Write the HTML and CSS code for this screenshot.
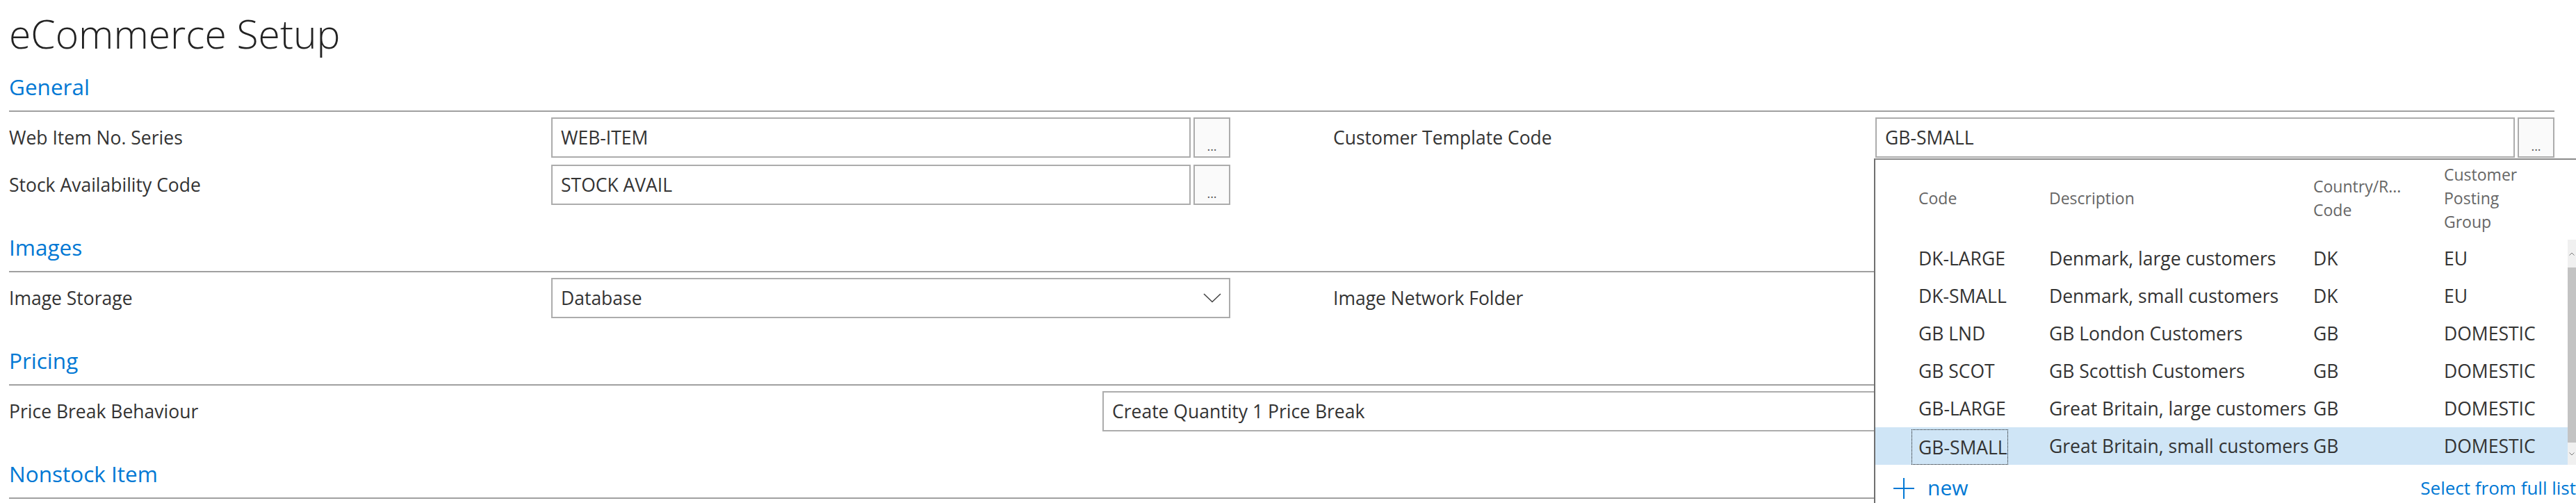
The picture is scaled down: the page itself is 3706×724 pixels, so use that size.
FILE: index.html
```html
<!DOCTYPE html>
<html lang="en">
<head>
<meta charset="utf-8">
<title>eCommerce Setup</title>
<link rel="stylesheet" href="styles.css">
</head>
<body>
<div class="page">
  <h1 class="title">eCommerce Setup</h1>

  <section class="section">
    <h2 class="section-head">General</h2>
    <div class="fields">
      <div class="field">
        <span class="label">Web Item No. Series</span>
        <div class="control"><div class="input">WEB-ITEM</div><div class="assist">...</div></div>
      </div>
      <div class="field">
        <span class="label">Customer Template Code</span>
        <div class="control"><div class="input">GB-SMALL</div><div class="assist">...</div></div>
      </div>
      <div class="field">
        <span class="label">Stock Availability Code</span>
        <div class="control"><div class="input">STOCK AVAIL</div><div class="assist">...</div></div>
      </div>
    </div>
  </section>

  <section class="section">
    <h2 class="section-head">Images</h2>
    <div class="fields">
      <div class="field">
        <span class="label">Image Storage</span>
        <div class="control"><div class="input select"><span>Database</span>
          <svg class="chev" width="26" height="14" viewBox="0 0 26 14"><polyline points="1,1 13,12.5 25,1" fill="none" stroke="#444" stroke-width="1.6"/></svg></div></div>
      </div>
      <div class="field">
        <span class="label">Image Network Folder</span>
        <div class="control"><div class="input"></div></div>
      </div>
    </div>
  </section>

  <section class="section">
    <h2 class="section-head">Pricing</h2>
    <div class="fields">
      <div class="field wide">
        <span class="label">Price Break Behaviour</span>
        <div class="control"><div class="input select"><span>Create Quantity 1 Price Break</span></div></div>
      </div>
    </div>
  </section>

  <section class="section">
    <h2 class="section-head">Nonstock Item</h2>
  </section>
</div>

<div class="lookup">
  <div class="lk-head">
    <div class="lk-cell"></div>
    <div class="lk-cell code">Code</div>
    <div class="lk-cell">Description</div>
    <div class="lk-cell">Country/R...<br>Code</div>
    <div class="lk-cell">Customer<br>Posting<br>Group</div>
  </div>
  <div class="lk-body">
    <div class="lk-rows">
      <div class="lk-row"><div class="lk-cell"></div><div class="lk-cell code">DK-LARGE</div><div class="lk-cell">Denmark, large customers</div><div class="lk-cell">DK</div><div class="lk-cell">EU</div></div>
      <div class="lk-row"><div class="lk-cell"></div><div class="lk-cell code">DK-SMALL</div><div class="lk-cell">Denmark, small customers</div><div class="lk-cell">DK</div><div class="lk-cell">EU</div></div>
      <div class="lk-row"><div class="lk-cell"></div><div class="lk-cell code">GB LND</div><div class="lk-cell">GB London Customers</div><div class="lk-cell">GB</div><div class="lk-cell">DOMESTIC</div></div>
      <div class="lk-row"><div class="lk-cell"></div><div class="lk-cell code">GB SCOT</div><div class="lk-cell">GB Scottish Customers</div><div class="lk-cell">GB</div><div class="lk-cell">DOMESTIC</div></div>
      <div class="lk-row"><div class="lk-cell"></div><div class="lk-cell code">GB-LARGE</div><div class="lk-cell">Great Britain, large customers</div><div class="lk-cell">GB</div><div class="lk-cell">DOMESTIC</div></div>
      <div class="lk-row selected"><div class="lk-cell"></div><div class="lk-cell code"><span class="focus">GB-SMALL</span></div><div class="lk-cell">Great Britain, small customers</div><div class="lk-cell">GB</div><div class="lk-cell">DOMESTIC</div></div>
    </div>
    <div class="scrollbar">
      <div class="sb-arrow up"><svg width="8" height="5" viewBox="0 0 8 5"><polyline points="0.5,4.5 4,1 7.5,4.5" fill="none" stroke="#777" stroke-width="1"/></svg></div>
      <div class="sb-thumb"></div>
      <div class="sb-arrow down"><svg width="8" height="5" viewBox="0 0 8 5"><polyline points="0.5,0.5 4,4 7.5,0.5" fill="none" stroke="#777" stroke-width="1"/></svg></div>
    </div>
  </div>
  <div class="lk-foot">
    <svg class="plus" width="30" height="30" viewBox="0 0 30 30"><line x1="15" y1="0" x2="15" y2="30" stroke="#0078d4" stroke-width="2"/><line x1="0" y1="15" x2="30" y2="15" stroke="#0078d4" stroke-width="2"/></svg>
    <span class="new">new</span>
    <span class="full">Select from full list</span>
  </div>
</div>
</body>
</html>
```

FILE: styles.css
```css
* { box-sizing: border-box; }

html, body {
  margin: 0;
  padding: 0;
  background: #fff;
}

body {
  font-family: "Open Sans", "Noto Sans", sans-serif;
  color: #333;
  width: 3706px;
  height: 724px;
  overflow: hidden;
  position: relative;
}

.page {
  padding: 0 31px 0 13px;
  height: 724px;
  overflow: hidden;
}

.title {
  margin: 0;
  padding-top: 8px;
  font-size: 57px;
  line-height: 80px;
  font-weight: 300;
  color: #222;
}

.section-head {
  margin: 41px 0 0;
  padding-bottom: 14px;
  font-size: 31.5px;
  line-height: 40px;
  font-weight: 400;
  color: #0078d4;
  border-bottom: 2px solid #a0a0a0;
}

.section:first-of-type .section-head {
  margin-top: 17px;
}

.fields {
  display: grid;
  grid-template-columns: 1757px 1757px;
  column-gap: 148px;
  row-gap: 10px;
  padding-top: 8px;
}

.field {
  display: grid;
  grid-template-columns: 780px 1fr;
  align-items: center;
  height: 58px;
}

.field.wide {
  grid-column: 1 / -1;
  grid-template-columns: 1573px 1fr;
}

.label {
  font-size: 26.5px;
  color: #333;
  white-space: nowrap;
}

.control {
  display: flex;
  gap: 4px;
  height: 58px;
}

.input {
  flex: 1;
  display: flex;
  align-items: center;
  padding: 0 12px;
  border: 2px solid #acacac;
  font-size: 26.5px;
  color: #333;
  white-space: nowrap;
}

.input.select {
  justify-content: space-between;
  padding-right: 11px;
}

.chev { display: block; }

.assist {
  width: 53px;
  display: flex;
  justify-content: center;
  align-items: flex-end;
  padding-bottom: 6px;
  border: 2px solid #acacac;
  background: #fafafa;
  font-size: 18px;
  line-height: 1;
  color: #555;
}

/* lookup dropdown */
.lookup {
  position: absolute;
  left: 2696px;
  top: 228px;
  width: 1010px;
  height: 496px;
  background: #fff;
  border-left: 2px solid #6f6f6f;
  border-top: 2px solid #8a8a8a;
  overflow: hidden;
}

.lk-head,
.lk-row {
  display: grid;
  grid-template-columns: 52px 198px 380px 188px 1fr;
}

.lk-head {
  height: 115px;
  padding: 4px 0 9px;
  font-size: 23px;
  line-height: 34px;
  color: #666;
}

.lk-head .lk-cell {
  display: flex;
  align-items: center;
}

.lk-cell.code { padding-left: 10px; }

.lk-body {
  display: grid;
  grid-template-columns: 1fr 12px;
}

.lk-row {
  height: 54px;
  font-size: 26.5px;
  color: #333;
  white-space: nowrap;
}

.lk-row .lk-cell {
  display: flex;
  align-items: center;
}

.lk-row.selected {
  background: #cfe5f6;
}

.lk-row .lk-cell.code:has(.focus) {
  padding-left: 0;
  align-items: flex-end;
}

.focus {
  display: flex;
  align-items: center;
  width: 139px;
  height: 51px;
  padding-left: 9px;
  border: 1px dotted #111;
  overflow: hidden;
}

.scrollbar {
  display: flex;
  flex-direction: column;
  background: #f0f0f0;
}

.sb-arrow {
  display: flex;
  justify-content: center;
  align-items: center;
}

.sb-arrow.up { height: 40px; }
.sb-arrow.down { height: 32px; }

.sb-thumb {
  flex: 1;
  background: #c3c3c3;
}

.lk-foot {
  display: flex;
  align-items: flex-start;
  padding: 18px 0 0 26px;
  color: #0078d4;
  white-space: nowrap;
}

.plus {
  display: block;
  margin-top: 1px;
}

.new {
  margin-left: 19px;
  font-size: 30px;
  line-height: 30px;
}

.full {
  margin-left: auto;
  font-size: 26px;
  line-height: 30px;
}
```
